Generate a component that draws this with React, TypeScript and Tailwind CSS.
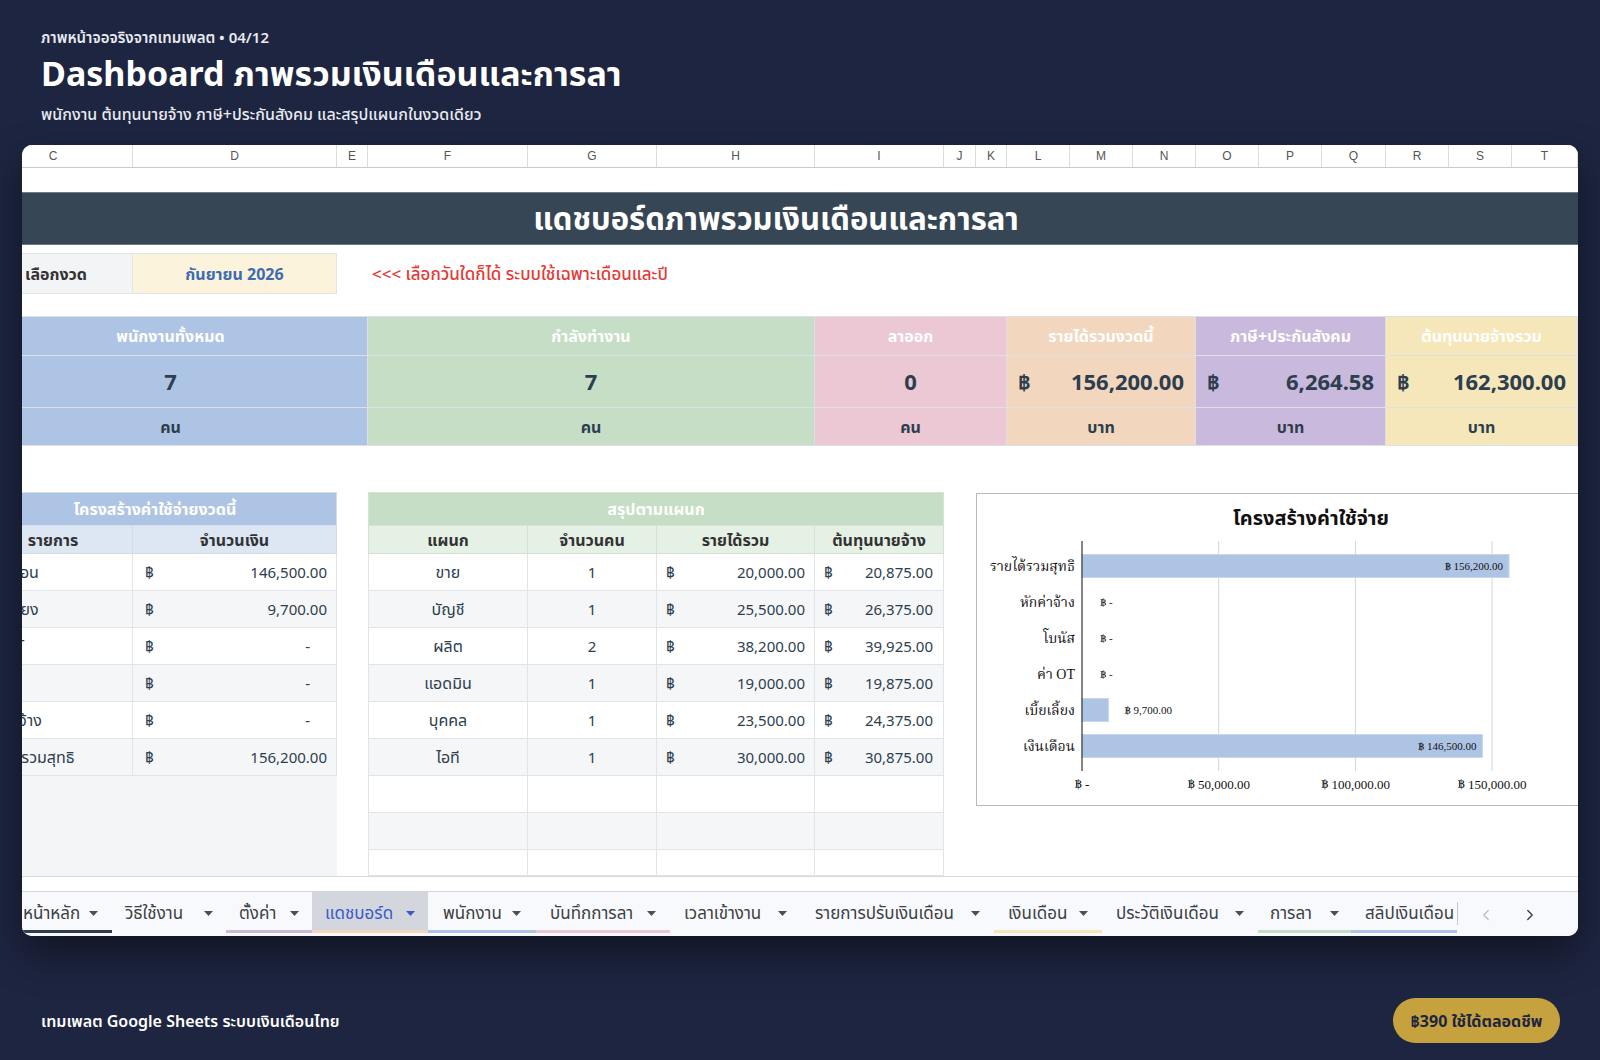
import React from "react";
import { ChevronLeft, ChevronRight } from "lucide-react";

const COLS =
  "grid w-[1604px] grid-cols-[159px_204px_31px_160px_129px_158px_129px_32px_31px_63px_63px_63px_63px_63px_64px_63px_63px_66px]";

const LETTERS = ["C", "D", "E", "F", "G", "H", "I", "J", "K", "L", "M", "N", "O", "P", "Q", "R", "S", "T"];

const KPIS = [
  { h: "พนักงานทั้งหมด", v: "7", u: "คน", money: false, bg: "bg-[#aec4e5]" },
  { h: "กำลังทำงาน", v: "7", u: "คน", money: false, bg: "bg-[#c5dec5]" },
  { h: "ลาออก", v: "0", u: "คน", money: false, bg: "bg-[#ebc8d4]" },
  { h: "รายได้รวมงวดนี้", v: "156,200.00", u: "บาท", money: true, bg: "bg-[#f2d6bd]" },
  { h: "ภาษี+ประกันสังคม", v: "6,264.58", u: "บาท", money: true, bg: "bg-[#c8b9dd]" },
  { h: "ต้นทุนนายจ้างรวม", v: "162,300.00", u: "บาท", money: true, bg: "bg-[#f5e7b9]" },
];

const COST = [
  ["เงินเดือน", "146,500.00"],
  ["เบี้ยเลี้ยง", "9,700.00"],
  ["ค่า OT", "-"],
  ["โบนัส", "-"],
  ["หักค่าจ้าง", "-"],
  ["รายได้รวมสุทธิ", "156,200.00"],
];

const DEPT = [
  ["ขาย", "1", "20,000.00", "20,875.00"],
  ["บัญชี", "1", "25,500.00", "26,375.00"],
  ["ผลิต", "2", "38,200.00", "39,925.00"],
  ["แอดมิน", "1", "19,000.00", "19,875.00"],
  ["บุคคล", "1", "23,500.00", "24,375.00"],
  ["ไอที", "1", "30,000.00", "30,875.00"],
];

const TABS = [
  { t: "หน้าหลัก", w: "w-[90px] pl-[1px] pr-[14px]", u: "border-[#2f3e4e]", arrow: true },
  { t: "วิธีใช้งาน", w: "w-[114px] px-[13px]", u: "border-transparent", arrow: true },
  { t: "ตั้งค่า", w: "w-[86px] px-[13px]", u: "border-[#c8b9dd]", arrow: true },
  { t: "แดชบอร์ด", w: "w-[116px] px-[13px]", u: "border-[#f2d6bd]", arrow: true, active: true },
  { t: "พนักงาน", w: "w-[108px] px-[15px]", u: "border-[#aec4e5]", arrow: true },
  { t: "บันทึกการลา", w: "w-[134px] px-[14px]", u: "border-[#ebc8d4]", arrow: true },
  { t: "เวลาเข้างาน", w: "w-[131px] px-[14px]", u: "border-transparent", arrow: true },
  { t: "รายการปรับเงินเดือน", w: "w-[193px] px-[14px]", u: "border-transparent", arrow: true },
  { t: "เงินเดือน", w: "w-[108px] px-[14px]", u: "border-[#f5e7b9]", arrow: true },
  { t: "ประวัติเงินเดือน", w: "w-[156px] px-[14px]", u: "border-transparent", arrow: true },
  { t: "การลา", w: "w-[93px] px-[12px]", u: "border-[#c5dec5]", arrow: true },
  { t: "สลิปเงินเดือน", w: "w-[106px] pl-[14px]", u: "border-[#aec4e5]", arrow: false },
];

function Tri({ active }: { active?: boolean }) {
  return (
    <svg width="9" height="5" viewBox="0 0 9 5" className="shrink-0">
      <path d="M0 0h9L4.5 5z" fill={active ? "#3a5bc7" : "#4a4f55"} />
    </svg>
  );
}

function Baht({ amount, dashPad }: { amount: string; dashPad?: boolean }) {
  return (
    <>
      <span>฿</span>
      <span className={amount === "-" && dashPad ? "mr-[17px]" : ""}>{amount}</span>
    </>
  );
}

function Chart() {
  const x0 = 105;
  const k = 136.7 / 50000;
  const rows = [
    { label: "รายได้รวมสุทธิ", v: 156200, text: "฿ 156,200.00" },
    { label: "หักค่าจ้าง", v: 0, text: "฿ -" },
    { label: "โบนัส", v: 0, text: "฿ -" },
    { label: "ค่า OT", v: 0, text: "฿ -" },
    { label: "เบี้ยเลี้ยง", v: 9700, text: "฿ 9,700.00" },
    { label: "เงินเดือน", v: 146500, text: "฿ 146,500.00" },
  ];
  const serif = "'Liberation Serif', 'Noto Serif Thai', serif";
  const ticks = [
    { x: x0, t: "฿ -" },
    { x: x0 + 136.7, t: "฿ 50,000.00" },
    { x: x0 + 273.4, t: "฿ 100,000.00" },
    { x: x0 + 410.1, t: "฿ 150,000.00" },
  ];
  return (
    <div className="absolute left-[954px] top-[325px] h-[313px] w-[640px] border border-[#b9b9b9] bg-white">
      <svg width="640" height="311" viewBox="0 0 640 311">
        <text x="334" y="31" textAnchor="middle" fontSize="20" fontWeight="700" fill="#111" fontFamily="'Noto Sans', 'Noto Sans Thai', sans-serif">
          โครงสร้างค่าใช้จ่าย
        </text>
        {ticks.slice(1).map((t) => (
          <line key={t.t} x1={t.x} y1="47" x2={t.x} y2="277" stroke="#d6d6d6" strokeWidth="1" />
        ))}
        {rows.map((r, i) => {
          const cy = 72 + i * 36;
          const w = r.v * k;
          return (
            <g key={r.label}>
              <text x="98" y={cy + 5} textAnchor="end" fontSize="14" fill="#111" fontFamily={serif}>
                {r.label}
              </text>
              {w > 0 && <rect x={x0} y={cy - 11.5} width={w} height="23" fill="#aec4e5" stroke="#c9d7ee" strokeWidth="1" />}
              {w > 60 ? (
                <text x={x0 + w - 6} y={cy + 4} textAnchor="end" fontSize="11" fill="#111" fontFamily={serif}>
                  {r.text}
                </text>
              ) : (
                <text x={w > 0 ? x0 + w + 16 : 123} y={cy + 4} fontSize="11" fill="#111" fontFamily={serif}>
                  {r.text}
                </text>
              )}
            </g>
          );
        })}
        <line x1={x0} y1="47" x2={x0} y2="277" stroke="#333" strokeWidth="1.2" />
        {ticks.map((t) => (
          <text key={t.t} x={t.x} y="295" textAnchor="middle" fontSize="13" fill="#111" fontFamily={serif}>
            {t.t}
          </text>
        ))}
      </svg>
    </div>
  );
}

export default function App() {
  const cellB = "border-r border-b border-[#e1e4e8]";
  const emptyRows = [
    { h: "h-[37px]", bg: "bg-white" },
    { h: "h-[37px]", bg: "bg-[#f5f6f8]" },
    { h: "h-[26px]", bg: "bg-white" },
  ];
  return (
    <div className="min-h-screen w-full overflow-hidden bg-[#1e2540] font-['Noto_Sans','Noto_Sans_Thai',sans-serif]">
      <header className="px-[41px] pt-[27px]">
        <p className="text-[15px] font-semibold leading-[20px] text-[#e8eaf0]">ภาพหน้าจอจริงจากเทมเพลต • 04/12</p>
        <h1 className="mt-[6px] text-[34px] font-bold leading-[40px] text-white">Dashboard ภาพรวมเงินเดือนและการลา</h1>
        <p className="mt-[10px] text-[16px] font-medium leading-[22px] text-[#e8eaf0]">
          พนักงาน ต้นทุนนายจ้าง ภาษี+ประกันสังคม และสรุปแผนกในงวดเดียว
        </p>
      </header>

      <main className="mx-[22px] mt-[20px] flex h-[791px] flex-col overflow-hidden rounded-[10px] bg-white shadow-[0_18px_40px_rgba(0,0,0,0.45)]">
        {/* column letters */}
        <div className="h-[23px] shrink-0 overflow-hidden border-b border-[#c9c9c9] bg-white">
          <div className={`${COLS} -ml-[48px] h-full`}>
            {LETTERS.map((l) => (
              <div
                key={l}
                className="flex items-center justify-center border-r border-[#dcdcdc] font-['Liberation_Sans',sans-serif] text-[12px] text-[#555]"
              >
                {l}
              </div>
            ))}
          </div>
        </div>

        {/* sheet body */}
        <div className="relative h-[708px] shrink-0 overflow-hidden text-[#2d3e4e]">
          <div className="-ml-[48px] w-[1604px]">
            <div className="h-[24px]" />
            <div className={`${COLS} h-[53px]`}>
              <div className="col-span-18 flex items-center justify-center border-y border-[#6b7a88] bg-[#364655] text-[31px] font-bold text-white">
                แดชบอร์ดภาพรวมเงินเดือนและการลา
              </div>
            </div>
            <div className="h-[8px]" />
            <div className={`${COLS} h-[41px]`}>
              <div className="flex items-center border border-[#e3e5e8] bg-[#f3f4f6] pl-[50px] text-[16px] font-bold text-[#333]">
                เลือกงวด
              </div>
              <div className="flex items-center justify-center border-y border-r border-[#e3e5e8] bg-[#fbf3dc] text-[16px] font-bold text-[#3d6cb0]">
                กันยายน 2026
              </div>
              <div />
              <div className="col-span-15 flex items-center pl-[4px] text-[17px] font-medium text-[#e53935]">
                {"<<< เลือกวันใดก็ได้ ระบบใช้เฉพาะเดือนและปี"}
              </div>
            </div>
            <div className="h-[22px]" />

            {/* KPI */}
            <div className={`${COLS} h-[40px]`}>
              {KPIS.map((k) => (
                <div
                  key={k.h}
                  className={`col-span-3 flex items-center justify-center border-y border-r border-[#dde1e6] text-[16px] font-bold text-white ${k.bg}`}
                >
                  {k.h}
                </div>
              ))}
            </div>
            <div className={`${COLS} h-[52px]`}>
              {KPIS.map((k) =>
                k.money ? (
                  <div
                    key={k.h}
                    className={`col-span-3 flex items-center justify-between border-b border-r border-[#dde1e6] px-[11px] text-[22px] font-bold ${k.bg}`}
                  >
                    <span>฿</span>
                    <span>{k.v}</span>
                  </div>
                ) : (
                  <div
                    key={k.h}
                    className={`col-span-3 flex items-center justify-center border-b border-r border-[#dde1e6] text-[22px] font-bold ${k.bg}`}
                  >
                    {k.v}
                  </div>
                )
              )}
            </div>
            <div className={`${COLS} h-[38px]`}>
              {KPIS.map((k) => (
                <div
                  key={k.h}
                  className={`col-span-3 flex items-center justify-center border-b border-r border-[#dde1e6] text-[16px] font-bold ${k.bg}`}
                >
                  {k.u}
                </div>
              ))}
            </div>
            <div className="h-[46px]" />

            {/* tables header */}
            <div className={`${COLS} h-[34px]`}>
              <div className="col-span-2 flex items-center justify-center border-y border-r border-[#d6dde8] bg-[#aec4e5] text-[16px] font-bold text-white">
                โครงสร้างค่าใช้จ่ายงวดนี้
              </div>
              <div />
              <div className="col-span-4 flex items-center justify-center border border-[#d6e3d6] bg-[#c5dec5] text-[16px] font-bold text-white">
                สรุปตามแผนก
              </div>
              <div className="col-span-11" />
            </div>
            <div className={`${COLS} h-[28px] text-[16px] font-bold text-[#333]`}>
              <div className="flex items-center justify-center border-b border-r border-[#d3dbe6] bg-[#dde7f3]">รายการ</div>
              <div className="flex items-center justify-center border-b border-r border-[#d3dbe6] bg-[#dde7f3]">จำนวนเงิน</div>
              <div />
              <div className="flex items-center justify-center border-x border-b border-[#d3e0d3] bg-[#e6f1e6]">แผนก</div>
              <div className="flex items-center justify-center border-b border-r border-[#d3e0d3] bg-[#e6f1e6]">จำนวนคน</div>
              <div className="flex items-center justify-center border-b border-r border-[#d3e0d3] bg-[#e6f1e6]">รายได้รวม</div>
              <div className="flex items-center justify-center border-b border-r border-[#d3e0d3] bg-[#e6f1e6]">ต้นทุนนายจ้าง</div>
              <div className="col-span-11" />
            </div>

            {COST.map((c, i) => {
              const d = DEPT[i];
              const bg = i % 2 === 0 ? "bg-white" : "bg-[#f5f6f8]";
              return (
                <div key={c[0]} className={`${COLS} h-[37px] text-[15px]`}>
                  <div className={`flex items-center pl-[9px] text-[16px] ${cellB} ${bg}`}>
                    <span className="whitespace-nowrap">{c[0]}</span>
                  </div>
                  <div className={`flex items-center justify-between pl-[12px] pr-[9px] ${cellB} ${bg}`}>
                    <Baht amount={c[1]} dashPad />
                  </div>
                  <div />
                  <div className={`flex items-center justify-center border-l text-[16px] ${cellB} ${bg}`}>{d[0]}</div>
                  <div className={`flex items-center justify-center ${cellB} ${bg}`}>{d[1]}</div>
                  <div className={`flex items-center justify-between px-[9px] ${cellB} ${bg}`}>
                    <Baht amount={d[2]} />
                  </div>
                  <div className={`flex items-center justify-between pl-[9px] pr-[10px] ${cellB} ${bg}`}>
                    <Baht amount={d[3]} />
                  </div>
                  <div className="col-span-11" />
                </div>
              );
            })}

            {emptyRows.map((r, i) => (
              <div key={i} className={`${COLS} ${r.h}`}>
                <div className="col-span-2 bg-[#f4f5f7]" />
                <div className="bg-white" />
                <div className={`border-l ${cellB} ${r.bg}`} />
                <div className={`${cellB} ${r.bg}`} />
                <div className={`${cellB} ${r.bg}`} />
                <div className={`${cellB} ${r.bg}`} />
                <div className="col-span-11 bg-white" />
              </div>
            ))}
          </div>
          <Chart />
        </div>

        {/* horizontal scroll strip */}
        <div className="h-[15px] shrink-0 border-t border-[#d6d8dc] bg-white" />

        {/* tab bar */}
        <div className="flex h-[45px] shrink-0 items-start border-t border-[#d3d5d9] bg-[#f8f9fc] text-[17px] text-[#3c4043]">
          {TABS.map((t) => (
            <div
              key={t.t}
              className={`flex h-[41px] shrink-0 items-center justify-between overflow-hidden border-b-[3px] pt-[4px] ${t.w} ${t.u} ${
                t.active ? "bg-[#d3d6dd] text-[#3a5bc7]" : ""
              }`}
            >
              <span className="whitespace-nowrap">{t.t}</span>
              {t.arrow && <Tri active={t.active} />}
            </div>
          ))}
          <div className="mt-[10px] h-[23px] w-px shrink-0 bg-[#c4c7cc]" />
          <div className="flex h-[41px] items-center gap-[26px] pl-[19px] pt-[4px]">
            <ChevronLeft size={18} strokeWidth={1.6} className="text-[#b8bcc2]" />
            <ChevronRight size={18} strokeWidth={1.8} className="text-[#3c4043]" />
          </div>
        </div>
      </main>

      <footer className="mt-[62px] flex items-center justify-between pl-[41px] pr-[40px]">
        <p className="text-[16px] font-semibold text-white">เทมเพลต Google Sheets ระบบเงินเดือนไทย</p>
        <button className="flex h-[45px] w-[167px] items-center justify-center rounded-full bg-[#c6a23f] text-[16px] font-bold text-[#1e2540]">
          ฿390 ใช้ได้ตลอดชีพ
        </button>
      </footer>
    </div>
  );
}
